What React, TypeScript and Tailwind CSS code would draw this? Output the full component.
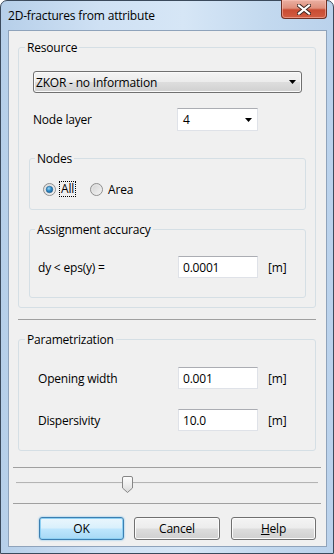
import React from "react";

function Arrow() {
  return (
    <svg width="7" height="4" viewBox="0 0 7 4" className="block">
      <path d="M0 0 H7 L3.5 4 Z" fill="#000" />
    </svg>
  );
}

function TextBox({ value, cls }: { value: string; cls?: string }) {
  return (
    <div
      className={
        "h-[22px] w-[80px] bg-white border border-[#dfe2e8] border-t-[#abadb3] flex items-center pl-[4px] text-black " +
        (cls || "")
      }
    >
      {value}
    </div>
  );
}

function Radio({ checked }: { checked: boolean }) {
  return (
    <svg width="13" height="13" viewBox="0 0 13 13" className="block shrink-0">
      <defs>
        <linearGradient id={checked ? "rg1" : "rg0"} x1="0" y1="0" x2="1" y2="1">
          <stop offset="0" stopColor="#cfcfcf" />
          <stop offset="1" stopColor="#f7f7f7" />
        </linearGradient>
        <radialGradient id="dot" cx="0.4" cy="0.35" r="0.7">
          <stop offset="0" stopColor="#9fd6f5" />
          <stop offset="0.5" stopColor="#2d8cc8" />
          <stop offset="1" stopColor="#1a5d92" />
        </radialGradient>
      </defs>
      <circle cx="6.5" cy="6.5" r="6" fill={checked ? "url(#rg1)" : "url(#rg0)"} stroke="#8f8f8f" strokeWidth="1" />
      <circle cx="6.5" cy="6.5" r="4.6" fill="none" stroke="#e9e9e9" strokeWidth="0.8" />
      {checked && <circle cx="6.5" cy="6.5" r="3.3" fill="url(#dot)" stroke="#1d5a8a" strokeWidth="0.5" />}
    </svg>
  );
}

const btnBase =
  "h-[23px] w-[85px] rounded-[3px] border flex items-center justify-center text-black";
const btnNormal =
  "border-[#707070] bg-[linear-gradient(180deg,#f4f4f4_0%,#ececec_48%,#dddddd_52%,#d0d0d0_100%)] shadow-[inset_0_0_0_1px_#fbfbfb]";
const btnDefault =
  "border-[#3c7fb1] bg-[linear-gradient(180deg,#eaf6fd_0%,#d9f0fc_48%,#bee6fd_52%,#a7d9f5_100%)] shadow-[inset_0_0_0_1px_#8ed0f3,0_0_2px_#5fb6ea]";

export default function App() {
  return (
    <div className="w-[334px] h-[554px] overflow-hidden font-['Segoe_UI','Open_Sans',sans-serif] text-[12px] leading-[15px] tracking-[-0.2px] text-black">
      <div className="w-[334px] h-[554px] border border-[#3b4a5c] rounded-t-[7px] bg-[linear-gradient(90deg,#b6cfe9_0%,#cfe1f4_30%,#d6e6f6_55%,#c3d9ef_80%,#bad2ec_100%)] flex flex-col">
        {/* Title bar */}
        <div className="h-[29px] flex items-start justify-between shrink-0">
          <div className="pl-[7px] pt-[7px] text-[#000]">2D-fractures from attribute</div>
          <div className="mr-[6px] w-[46px] h-[19px] -mt-px rounded-b-[4px] border border-t-0 border-[#6e3024] bg-[linear-gradient(180deg,#eab0a2_0%,#df8f7c_45%,#c94c33_55%,#d25d42_100%)] flex items-center justify-center shadow-[inset_0_0_0_1px_rgba(255,200,190,0.5)]">
            <svg width="14" height="11" viewBox="0 0 14 11" className="block">
              <path d="M2 1.5 L12 9.5 M12 1.5 L2 9.5" stroke="#3b2520" strokeWidth="4" strokeLinecap="square" />
              <path d="M2 1.5 L12 9.5 M12 1.5 L2 9.5" stroke="#ffffff" strokeWidth="2.2" strokeLinecap="square" />
            </svg>
          </div>
        </div>

        {/* Client area */}
        <div className="ml-[7px] w-[319px] h-[517px] border border-[#8fa3bb] bg-[#f0f0f0] flex flex-col">
          {/* Resource */}
          <fieldset className="mt-[9px] ml-[9px] w-[298px] border border-[#d5dfe5] rounded-[3px] pb-[9px]">
            <legend className="ml-[6px] px-[2px] leading-[15px]">Resource</legend>
            <div className="mt-[16px] ml-[14px] w-[269px] h-[22px] rounded-[3px] border border-[#707070] bg-[linear-gradient(180deg,#f4f4f4_0%,#ececec_48%,#dddddd_52%,#d0d0d0_100%)] shadow-[inset_0_0_0_1px_#fafafa] flex items-center justify-between pl-[2px] pr-[5px]">
              <span>ZKOR - no Information</span>
              <Arrow />
            </div>
            <div className="mt-[15px] ml-[14px] flex items-center h-[23px]">
              <span className="w-[144px]">Node layer</span>
              <div className="w-[81px] h-[23px] bg-white border border-[#dfe2e8] border-t-[#abadb3] flex items-center justify-between pl-[5px] pr-[5px]">
                <span>4</span>
                <Arrow />
              </div>
            </div>

            {/* Nodes */}
            <fieldset className="mt-[20px] ml-[10px] w-[277px] border border-[#d5dfe5] rounded-[3px] pb-[12px]">
              <legend className="ml-[5px] px-[2px] leading-[15px]">Nodes</legend>
              <div className="mt-[15px] ml-[13px] h-[16px] flex items-center">
                <Radio checked />
                <span className="ml-[3px] h-[16px] px-[1px] border border-dotted border-black flex items-center leading-[14px]">All</span>
                <span className="ml-[14px]"><Radio checked={false} /></span>
                <span className="ml-[5px]">Area</span>
              </div>
            </fieldset>

            {/* Assignment accuracy */}
            <fieldset className="mt-[12px] ml-[10px] w-[277px] border border-[#d5dfe5] rounded-[3px] pb-[19px]">
              <legend className="ml-[5px] px-[2px] leading-[15px]">Assignment accuracy</legend>
              <div className="mt-[19px] ml-[8px] flex items-center">
                <span className="w-[140px]">dy &lt; eps(y) =</span>
                <TextBox value="0.0001" />
                <span className="ml-[10px]">[m]</span>
              </div>
            </fieldset>
          </fieldset>

          {/* separator */}
          <div className="mt-[11px] ml-[9px] w-[298px] h-px bg-[#a0a0a0]" />

          {/* Parametrization */}
          <fieldset className="mt-[12px] ml-[9px] w-[298px] border border-[#d5dfe5] rounded-[3px] pb-[19px]">
            <legend className="ml-[6px] px-[2px] leading-[15px]">Parametrization</legend>
            <div className="mt-[20px] ml-[19px] flex items-center">
              <span className="w-[140px]">Opening width</span>
              <TextBox value="0.001" />
              <span className="ml-[10px]">[m]</span>
            </div>
            <div className="mt-[20px] ml-[19px] flex items-center">
              <span className="w-[140px]">Dispersivity</span>
              <TextBox value="10.0" />
              <span className="ml-[10px]">[m]</span>
            </div>
          </fieldset>

          {/* slider section */}
          <div className="mt-[16px] ml-[4px] w-[308px] h-px bg-[#a0a0a0]" />
          <div className="relative h-[35px]">
            <div className="absolute left-[7px] top-[14px] w-[302px] h-[2px] border-t border-[#b4b4b4] bg-[#ececec]" />
            <svg width="11" height="17" viewBox="0 0 11 17" className="absolute left-[113px] top-[8px]">
              <defs>
                <linearGradient id="th" x1="0" y1="0" x2="0" y2="1">
                  <stop offset="0" stopColor="#fdfdfd" />
                  <stop offset="0.5" stopColor="#eeeeee" />
                  <stop offset="1" stopColor="#d8d8d8" />
                </linearGradient>
              </defs>
              <path d="M0.5 2 Q0.5 0.5 2 0.5 H9 Q10.5 0.5 10.5 2 V12 L5.5 16.5 L0.5 12 Z" fill="url(#th)" stroke="#868686" />
            </svg>
          </div>
          <div className="ml-[4px] w-[308px] h-px bg-[#a0a0a0]" />

          {/* buttons */}
          <div className="mt-[13px] flex">
            <div className={btnBase + " ml-[30px] " + btnDefault}>OK</div>
            <div className={btnBase + " ml-[10px] w-[86px] " + btnNormal}>Cancel</div>
            <div className={btnBase + " ml-[11px] " + btnNormal}>
              <span><span className="underline">H</span>elp</span>
            </div>
          </div>
        </div>
      </div>
    </div>
  );
}
